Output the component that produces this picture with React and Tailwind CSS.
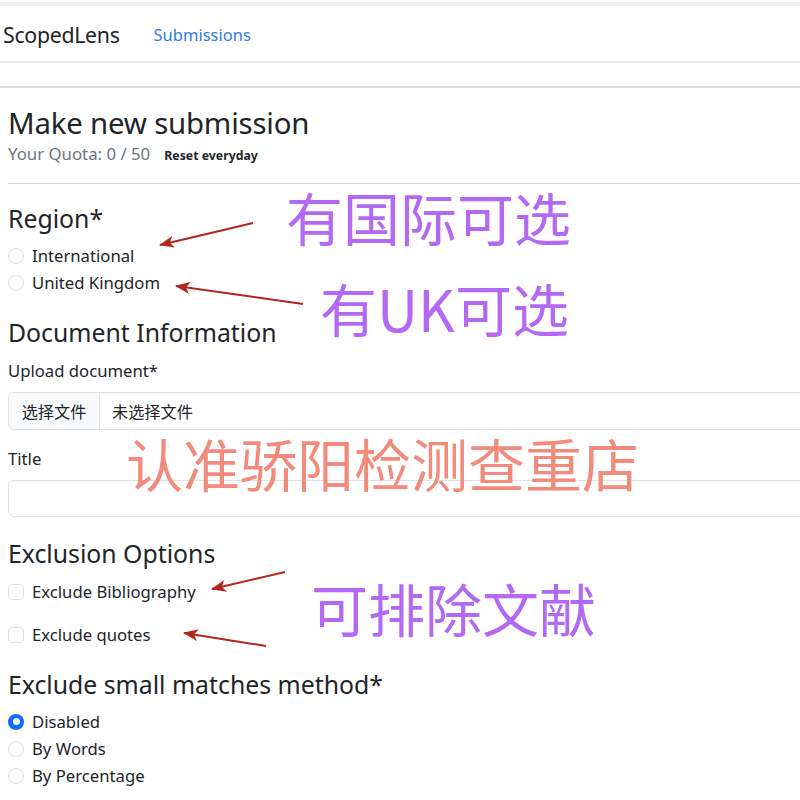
import React from 'react';

const Radio = ({ label, checked }) => (
  <label className="flex items-center h-[27px] gap-2">
    {checked ? (
      <span className="w-4 h-4 rounded-full bg-[#0d6efd] flex items-center justify-center">
        <span className="w-[7px] h-[7px] rounded-full bg-white" />
      </span>
    ) : (
      <span className="w-4 h-4 rounded-full border border-[#dee2e6] bg-white" />
    )}
    <span>{label}</span>
  </label>
);

const Check = ({ label, className }) => (
  <label className={`flex items-center h-6 gap-2 ${className}`}>
    <span className="w-4 h-4 rounded-[4px] border border-[#dee2e6] bg-white" />
    <span>{label}</span>
  </label>
);

const Arrows = () => {
  const arrows = [
    [253, 223, 160, 245],
    [303, 304, 176, 286],
    [285, 572, 212, 589],
    [266, 646, 184, 633],
  ];
  return (
    <svg className="absolute left-0 top-0 pointer-events-none" width="800" height="800" viewBox="0 0 800 800">
      <defs>
        <marker id="head" markerWidth="16" markerHeight="12" refX="14" refY="6" orient="auto" markerUnits="userSpaceOnUse">
          <path d="M0,0 L15,6 L0,12 L4,6 z" fill="#b3261e" />
        </marker>
      </defs>
      {arrows.map(([x1, y1, x2, y2], i) => (
        <line key={i} x1={x1} y1={y1} x2={x2} y2={y2} stroke="#b3261e" strokeWidth="2" markerEnd="url(#head)" />
      ))}
    </svg>
  );
};

export default function App() {
  const cjk = { fontFamily: '"Noto Sans CJK SC", "Noto Sans", sans-serif' };
  return (
    <div className="relative w-[800px] h-[800px] overflow-hidden bg-white text-[#212529] text-[16.7px] font-['Noto_Sans','Noto_Sans_CJK_SC',sans-serif]">
      <div className="w-[900px]">
        {/* top strip */}
        <div className="h-[6px] border-t-2 border-white bg-[#eeeeee]" />

        {/* navbar */}
        <nav className="h-[57px] pt-[3px] flex items-center border-b-2 border-[#ececec]">
          <span className="pl-[3px] text-[21.3px] tracking-[-0.3px]">ScopedLens</span>
          <a className="ml-[34px] text-[16.5px] text-[#2f7be6]">Submissions</a>
        </nav>
        <div className="h-[25px] border-b-2 border-[#dcdcdc]" />

        <div className="pl-2">
          <h2 className="pt-[17px] text-[29.4px] leading-[36px] tracking-[-0.2px]">Make new submission</h2>
          <div className="mt-[1px] flex items-baseline gap-[14px] leading-6">
            <span className="text-[#6c757d] text-[16.8px]">Your Quota: 0 / 50</span>
            <span className="text-[12.3px] font-bold">Reset everyday</span>
          </div>
          <div className="mt-[15px] border-b border-[#cfcfcf]" />

          {/* region */}
          <h4 className="mt-[19px] text-[24.8px] leading-[30px]">Region*</h4>
          <div className="mt-[9px]">
            <Radio label="International" />
            <Radio label="United Kingdom" />
          </div>

          {/* document */}
          <h4 className="mt-[21px] text-[24.8px] leading-[30px]">Document Information</h4>
          <div className="mt-3 leading-6">Upload document*</div>
          <div className="mt-[9px] h-[38px] flex border border-[#dee2e6] rounded-[6px] overflow-hidden text-[16.2px]" style={cjk}>
            <span className="w-[91px] flex items-center justify-center bg-[#f8f9fa] border-r border-[#dee2e6]">选择文件</span>
            <span className="flex items-center pl-3">未选择文件</span>
          </div>
          <div className="mt-[17px] leading-6">Title</div>
          <div className="mt-[9px] h-[37px] border border-[#dee2e6] rounded-[6px]" />

          {/* exclusion */}
          <h4 className="mt-[21px] text-[24.8px] leading-[30px]">Exclusion Options</h4>
          <div>
            <Check label="Exclude Bibliography" className="mt-3" />
            <Check label="Exclude quotes" className="mt-[19px]" />
          </div>

          <h4 className="mt-[22px] text-[24.8px] leading-[30px]">Exclude small matches method*</h4>
          <div className="mt-[9px]">
            <Radio label="Disabled" checked />
            <Radio label="By Words" />
            <Radio label="By Percentage" />
          </div>
        </div>
      </div>

      {/* annotations */}
      <div className="absolute left-[286px] top-[188px] text-[57px] leading-none text-[#b469f5]" style={cjk}>有国际可选</div>
      <div className="absolute left-[320px] top-[279px] text-[57px] leading-none text-[#b469f5]" style={cjk}>有UK可选</div>
      <div className="absolute left-[126px] top-[434px] text-[57px] leading-none text-[#f28b7c]" style={cjk}>认准骄阳检测查重店</div>
      <div className="absolute left-[311px] top-[579px] text-[57px] leading-none text-[#b469f5]" style={cjk}>可排除文献</div>
      <Arrows />
    </div>
  );
}
